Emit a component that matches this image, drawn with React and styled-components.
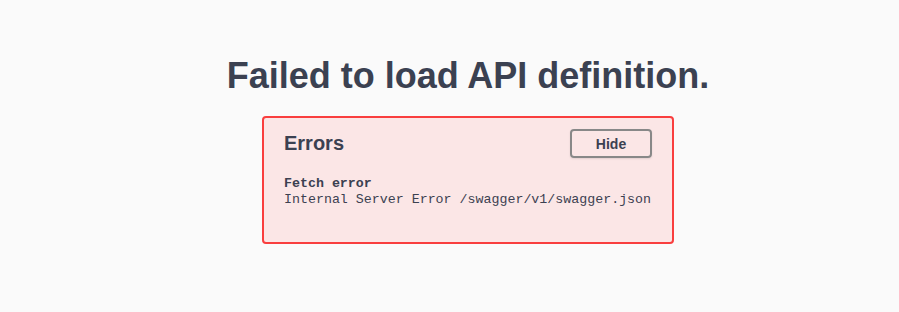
import React from 'react'
import styled, { createGlobalStyle } from 'styled-components'

const Global = createGlobalStyle`
  html, body {
    margin: 0;
    background: #fafafa;
    font-family: "Liberation Sans", Arial, sans-serif;
    color: #3b4151;
  }
`

const Page = styled.div`
  display: flex;
  flex-direction: column;
  align-items: center;
  padding: 54px 0 0 37px;
  height: 312px;
  box-sizing: border-box;
`

const Title = styled.h1`
  margin: 0;
  font-size: 36px;
  font-weight: 700;
  line-height: 44px;
  color: #3b4151;
`

const ErrorBox = styled.div`
  margin-top: 18px;
  width: 412px;
  height: 128px;
  box-sizing: border-box;
  padding: 11px 20px;
  background: #fbe6e6;
  border: 2px solid #f93e3e;
  border-radius: 4px;
`

const Head = styled.div`
  display: flex;
  align-items: center;
  justify-content: space-between;
`

const Heading = styled.h4`
  margin: 0;
  font-size: 20px;
  font-weight: 700;
  color: #3b4151;
`

const HideButton = styled.button`
  width: 82px;
  height: 29px;
  background: transparent;
  border: 2px solid #888;
  border-radius: 4px;
  box-shadow: 0 1px 2px rgba(0,0,0,0.1);
  font-family: "Liberation Sans", Arial, sans-serif;
  font-size: 14px;
  font-weight: 700;
  color: #3b4151;
  cursor: pointer;
`

const Message = styled.div`
  margin-top: 18px;
  font-family: "Liberation Mono", "Courier New", monospace;
  font-size: 13.3px;
  line-height: 16px;
  color: #3b4151;
`

const Label = styled.div`
  font-weight: 700;
`

export default function App() {
  return (
    <>
      <Global />
      <Page>
        <Title>Failed to load API definition.</Title>
        <ErrorBox>
          <Head>
            <Heading>Errors</Heading>
            <HideButton>Hide</HideButton>
          </Head>
          <Message>
            <Label>Fetch error</Label>
            <div>Internal Server Error /swagger/v1/swagger.json</div>
          </Message>
        </ErrorBox>
      </Page>
    </>
  )
}
